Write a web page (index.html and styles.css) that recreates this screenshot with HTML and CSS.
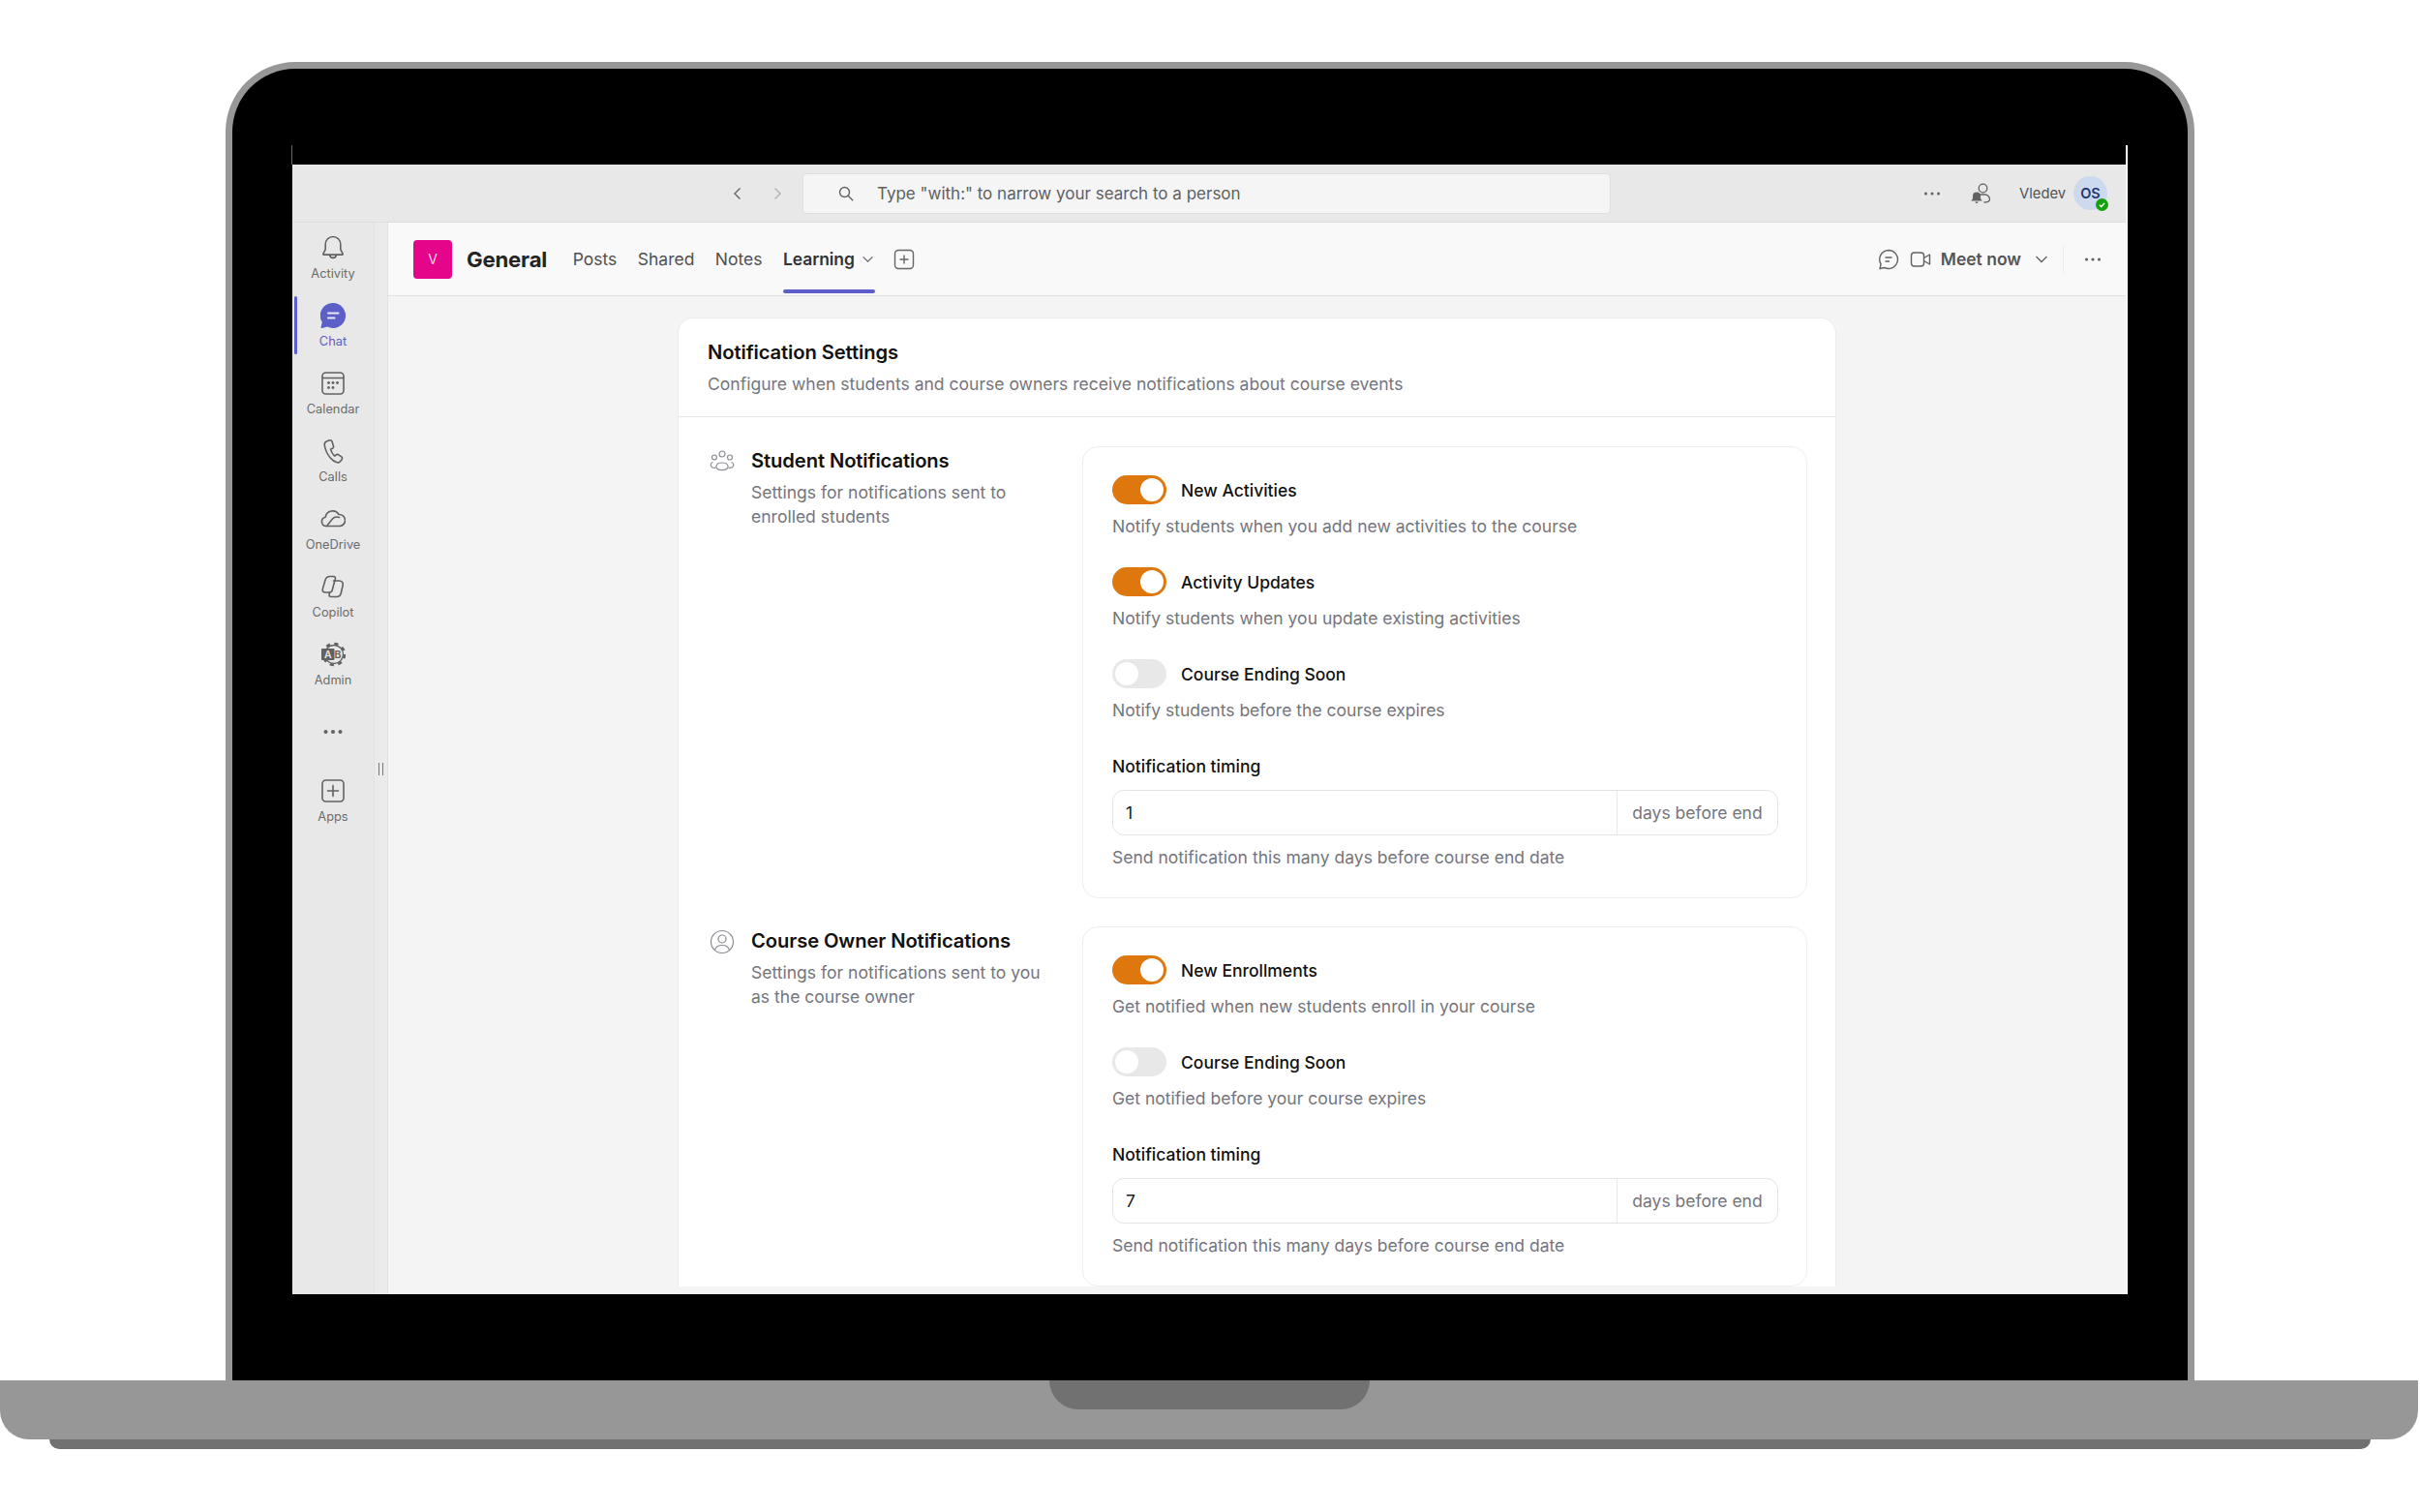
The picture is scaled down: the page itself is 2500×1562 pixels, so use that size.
FILE: index.html
```html
<!DOCTYPE html>
<html lang="en">
<head>
<meta charset="utf-8">
<title>Notification Settings</title>
<link rel="stylesheet" href="styles.css">
</head>
<body>
<div class="laptop">
  <div class="lid">
    <div class="screen">
      <header class="topbar">
        <svg class="nav-ic" viewBox="0 0 16 16"><path d="M10.500 2.500 5 8l5.500 5.500"/></svg>
        <svg class="nav-ic nav-fwd" viewBox="0 0 16 16"><path d="M5.500 2.500 11 8l-5.500 5.500"/></svg>
        <div class="search">
          <svg class="search-ic" viewBox="0 0 18 18"><circle cx="7.500" cy="7.500" r="5"/><path d="m11.200 11.200 5 5"/></svg>
          <span>Type "with:" to narrow your search to a person</span>
        </div>
        <div class="top-right">
          <svg class="dots top-dots" viewBox="0 0 18 4"><circle cx="2.500" cy="2" r="1.500"/><circle cx="9" cy="2" r="1.500"/><circle cx="15.500" cy="2" r="1.500"/></svg>
          <svg class="presence-ic" viewBox="0 0 22 22"><circle cx="13.500" cy="5.500" r="4.300" fill="none"/><path d="M10 12h5.500a5 5 0 0 1 5 5c0 2-2.500 3-6 3" fill="none"/><path class="solid" d="M7 9.500a4 4 0 0 0-4 4v2.500L1.300 18.500h11.400L11 16v-2.500a4 4 0 0 0-4-4zM5.500 19.500h3a1.500 1.500 0 0 1-3 0z"/></svg>
          <span class="user">Vledev</span>
          <div class="avatar">OS
            <span class="status"><svg viewBox="0 0 12 12"><path d="m3.500 6.200 1.800 1.700 3.200-3.500"/></svg></span>
          </div>
        </div>
      </header>
      <div class="app">
        <nav class="rail">
          <div class="rail-item">
            <svg class="rail-ic" viewBox="0 0 26 26"><path d="M13 1.500a7.800 7.800 0 0 0-7.800 7.800v5.400l-2.300 4.500a.6.600 0 0 0 .5.900h19.200a.6.600 0 0 0 .5-.900l-2.300-4.500V9.300A7.800 7.800 0 0 0 13 1.500z"/><path d="M9.800 20.200a3.200 3.200 0 0 0 6.400 0"/></svg>
            <span>Activity</span>
          </div>
          <div class="rail-item active">
            <svg class="rail-ic chat-ic" viewBox="0 0 26 26"><path class="fill" d="M13 0a13 13 0 1 1-5.800 24.600L1.800 26c-.8.200-1.500-.5-1.200-1.200l1.200-5A13 13 0 0 1 13 0z"/><path class="lines" d="M8 10.500h10.500M8 15.500h6.500"/></svg>
            <span>Chat</span>
          </div>
          <div class="rail-item">
            <svg class="rail-ic" viewBox="0 0 26 26"><rect x="2" y="2" width="22" height="22" rx="3.500"/><path d="M2 7.500h22"/><g class="pips"><circle cx="8.500" cy="12.500" r="1.400"/><circle cx="13" cy="12.500" r="1.400"/><circle cx="17.500" cy="12.500" r="1.400"/><circle cx="8.500" cy="17.500" r="1.400"/><circle cx="13" cy="17.500" r="1.400"/></g></svg>
            <span>Calendar</span>
          </div>
          <div class="rail-item">
            <svg class="rail-ic" viewBox="0 0 26 26"><path d="M9.500 1.800 6.800 2.700C5 3.300 4 5 4.300 7c.8 5 3 9.500 6 13 1.800 2.200 3.900 3.800 6.400 4.600 1.500.5 3.200 0 4.200-1.300l1.200-1.600c.7-.9.500-2.100-.4-2.800l-3-2.100c-.8-.5-1.800-.5-2.500.1l-1.500 1.200c-2-1.800-3.500-4.300-4.200-7l1.900-.9c.9-.4 1.300-1.400 1.100-2.300L12 3.100c-.3-1-1.500-1.600-2.500-1.300z"/></svg>
            <span>Calls</span>
          </div>
          <div class="rail-item">
            <svg class="rail-ic" viewBox="0 0 26 26"><path d="M6 20.500a4.700 4.700 0 0 1-.8-9.300A7.500 7.500 0 0 1 19 8.500a6 6 0 0 1 1 12z"/><path d="m6.500 20.500 6-7.500c1.500-1.800 4-2.600 7-1.500"/></svg>
            <span>OneDrive</span>
          </div>
          <div class="rail-item">
            <svg class="rail-ic" viewBox="0 0 26 26"><path d="M10 2.500h3.500c1.600 0 2.200 1 1.900 2.300l-3.200 12c-.4 1.500-1.400 2.200-2.800 2.200H5c-2 0-3.200-1.500-2.700-3.400L5 6.300C5.700 3.800 7.500 2.500 10 2.500z"/><path d="M13.500 7h6c2.500 0 4.300 2 3.700 4.500l-2 8.500c-.6 2.400-2.200 3.500-4.400 3.500H11c-1.500 0-2.300-1-1.900-2.400l.6-2.100"/></svg>
            <span>Copilot</span>
          </div>
          <div class="rail-item">
            <svg class="rail-ic admin-ic" viewBox="0 0 26 26"><circle cx="14" cy="13" r="9.500"/><circle class="teeth" cx="14" cy="13" r="11" stroke-dasharray="4.200 4.440"/><rect class="solid" x="1" y="7" width="13.500" height="12" rx="1"/><text class="admin-a" x="7.800" y="16.800">A</text><text class="admin-b" x="18" y="16.800">B</text></svg>
            <span>Admin</span>
          </div>
          <div class="rail-item rail-more">
            <svg class="dots more-dots" viewBox="0 0 20 4"><circle cx="2.500" cy="2" r="2"/><circle cx="10" cy="2" r="2"/><circle cx="17.500" cy="2" r="2"/></svg>
          </div>
          <div class="rail-item">
            <svg class="rail-ic" viewBox="0 0 26 26"><rect x="2" y="2" width="22" height="22" rx="3.500"/><path d="M13 7.500v11M7.500 13h11"/></svg>
            <span>Apps</span>
          </div>
        </nav>
        <div class="strip"><span class="grip"></span></div>
        <main class="main">
          <div class="channel">
            <div class="team">V</div>
            <h1 class="chan-name">General</h1>
            <div class="tabs">
              <span class="tab">Posts</span>
              <span class="tab">Shared</span>
              <span class="tab">Notes</span>
              <span class="tab tab-on">Learning
                <svg class="chev-s" viewBox="0 0 12 12"><path d="m1.500 4 4.500 4.500L10.500 4"/></svg>
              </span>
              <svg class="add-tab" viewBox="0 0 22 22"><rect x="1.500" y="1.500" width="19" height="19" rx="3.500"/><path d="M11 6.500v9M6.500 11h9"/></svg>
            </div>
            <div class="chan-right">
              <svg class="cr-ic" viewBox="0 0 22 22"><path d="M11 1.500a9.500 9.500 0 1 1-4.300 18L2 20.500l1.100-4.600A9.500 9.500 0 0 1 11 1.500z"/><path d="M7.500 9h7M7.500 13h4.500"/></svg>
              <svg class="cr-ic vid-ic" viewBox="0 0 22 22"><rect x="1.500" y="4" width="13" height="14" rx="3"/><path d="m14.500 9.500 6-3.500v10l-6-3.500"/></svg>
              <span class="meet">Meet now</span>
              <svg class="chev-m" viewBox="0 0 14 14"><path d="m1.500 4 5.500 5.500L12.500 4"/></svg>
              <span class="vr"></span>
              <svg class="dots chan-dots" viewBox="0 0 18 4"><circle cx="2.500" cy="2" r="1.600"/><circle cx="9" cy="2" r="1.600"/><circle cx="15.500" cy="2" r="1.600"/></svg>
            </div>
          </div>
          <div class="content">
            <section class="card">
              <div class="card-head">
                <h2 class="card-title">Notification Settings</h2>
                <p class="muted">Configure when students and course owners receive notifications about course events</p>
              </div>
              <div class="card-body">
                <div class="group">
                  <div class="group-info">
                    <svg class="group-ic" viewBox="0 0 26 24"><circle cx="13" cy="4" r="3"/><circle cx="5" cy="7.500" r="2.500"/><circle cx="21" cy="7.500" r="2.500"/><path d="M8 14.500c1-2 8.500-2 10 0 2 2.500 1 4-.5 5-2 1.500-7 1.500-9 0-1.500-1-2.500-2.500-.5-5z"/><path d="M3.500 12.500C1.500 13 .8 15 1.500 16.500c.6 1.200 2.500 2 4.800 1.800M22.500 12.500c2 .5 2.700 2.500 2 4-.6 1.200-2.500 2-4.800 1.800"/></svg>
                    <div class="group-text">
                      <h3 class="group-title">Student Notifications</h3>
                      <p class="muted">Settings for notifications sent to enrolled students</p>
                    </div>
                  </div>
                  <div class="panel">
                    <div class="setting">
                      <div class="row"><span class="switch on"></span><span class="label">New Activities</span></div>
                      <p class="muted hint">Notify students when you add new activities to the course</p>
                    </div>
                    <div class="setting">
                      <div class="row"><span class="switch on"></span><span class="label">Activity Updates</span></div>
                      <p class="muted hint">Notify students when you update existing activities</p>
                    </div>
                    <div class="setting">
                      <div class="row"><span class="switch"></span><span class="label">Course Ending Soon</span></div>
                      <p class="muted hint">Notify students before the course expires</p>
                    </div>
                    <div class="row"><span class="label flush">Notification timing</span></div>
                    <div class="field"><span class="value">1</span><span class="unit">days before end</span></div>
                    <p class="muted hint">Send notification this many days before course end date</p>
                  </div>
                </div>
                <div class="group">
                  <div class="group-info">
                    <svg class="group-ic" viewBox="0 0 26 26"><circle cx="13" cy="13" r="11.500"/><circle cx="13" cy="10" r="4"/><path d="M5.500 21.500c1-3.500 4-5 7.500-5s6.500 1.500 7.500 5"/></svg>
                    <div class="group-text">
                      <h3 class="group-title">Course Owner Notifications</h3>
                      <p class="muted">Settings for notifications sent to you as the course owner</p>
                    </div>
                  </div>
                  <div class="panel">
                    <div class="setting">
                      <div class="row"><span class="switch on"></span><span class="label">New Enrollments</span></div>
                      <p class="muted hint">Get notified when new students enroll in your course</p>
                    </div>
                    <div class="setting">
                      <div class="row"><span class="switch"></span><span class="label">Course Ending Soon</span></div>
                      <p class="muted hint">Get notified before your course expires</p>
                    </div>
                    <div class="row"><span class="label flush">Notification timing</span></div>
                    <div class="field"><span class="value">7</span><span class="unit">days before end</span></div>
                    <p class="muted hint">Send notification this many days before course end date</p>
                  </div>
                </div>
              </div>
            </section>
          </div>
        </main>
      </div>
    </div>
  </div>
  <div class="base"><div class="notch"></div></div>
  <div class="foot"></div>
</div>
</body>
</html>
```
FILE: styles.css
```css
* { box-sizing: border-box; }
html, body { margin: 0; padding: 0; background: #fff; }
body { font-family: Inter, "Noto Sans", sans-serif; color: #111; overflow: hidden; }
h1, h2, h3, p { margin: 0; font: inherit; }
svg { display: block; flex: none; }

.laptop { width: 2500px; height: 1562px; padding-top: 64px; }
.lid {
  position: relative;
  width: 2034px; height: 1362px; margin-left: 233px;
  border: 7px solid #979797; border-bottom: 0;
  border-radius: 72px 72px 0 0;
  background: #000;
  padding: 99px 62px 89px;
}
.lid::before { content: ""; position: absolute; left: 61px; top: 79px; width: 1px; height: 20px; background: #666; }
.lid::after { content: ""; position: absolute; right: 62px; top: 79px; bottom: 89px; width: 2px; background: #fff; }
.base {
  width: 2498px; height: 61px;
  background: #979797;
  border-radius: 0 0 30px 30px;
  display: flex; justify-content: center;
}
.notch { width: 331px; height: 30px; background: #717171; border-radius: 0 0 30px 30px; }
.foot { width: 2398px; height: 10px; margin-left: 51px; background: #717171; border-radius: 0 0 10px 10px; }

.screen { width: 1896px; height: 1167px; overflow: hidden; display: flex; flex-direction: column; background: #f4f4f4; }

.topbar { height: 60px; flex: none; background: #e8e8e8; border-bottom: 1px solid #dedede; display: flex; align-items: center; padding: 0 21px 0 452px; }
.nav-ic { width: 16px; height: 16px; fill: none; stroke: #666; stroke-width: 1.400; }
.nav-fwd { margin-left: 25px; stroke: #b0b0b0; }
.search { width: 835px; height: 42px; margin-left: 18px; background: #f5f5f5; border: 1px solid #e0e0e0; border-radius: 4px; display: flex; align-items: center; padding-left: 35px; font-size: 17px; color: #5f5f5f; }
.search-ic { width: 18px; height: 18px; margin-right: 23px; fill: none; stroke: #616161; stroke-width: 1.400; }
.top-right { margin-left: auto; display: flex; align-items: center; }
.dots { fill: #616161; }
.top-dots { width: 18px; height: 4px; margin-right: 1px; }
.presence-ic { width: 22px; height: 22px; margin-left: 29px; margin-right: -1px; fill: none; stroke: #616161; stroke-width: 1.300; }
.presence-ic .solid { fill: #616161; stroke: none; }
.user { margin-left: 30px; font-size: 14.800px; color: #555; width: 56px; }
.avatar { position: relative; width: 35px; height: 35px; border-radius: 50%; background: #cdd9ee; color: #1f3572; font-size: 14.500px; font-weight: 600; display: flex; align-items: center; justify-content: center; }
.status { position: absolute; right: -1px; bottom: -1px; width: 13px; height: 13px; border-radius: 50%; background: #13a10e; }
.status svg { width: 13px; height: 13px; fill: none; stroke: #fff; stroke-width: 1.300; }

.app { flex: 1; min-height: 0; display: flex; }
.rail { width: 84px; flex: none; background: #e8e8e8; display: flex; flex-direction: column; }
.rail-item { position: relative; height: 70px; padding-top: 13px; display: flex; flex-direction: column; align-items: center; font-size: 12.800px; line-height: 16px; color: #6b6b6b; }
.rail-ic { width: 26px; height: 26px; margin-bottom: 6px; fill: none; stroke: #616161; stroke-width: 1.600; stroke-linecap: round; stroke-linejoin: round; }
.rail-item.active { color: #5b5fc7; }
.rail-item.active::before { content: ""; position: absolute; left: 2px; top: 6px; width: 3px; height: 60px; background: #5b5fc7; border-radius: 2px; }
.chat-ic .fill { fill: #5b5fc7; stroke: none; }
.chat-ic .lines { stroke: #e8e8f8; stroke-width: 2; }
.pips circle { fill: #616161; stroke: none; }
.admin-ic circle { stroke-width: 1.300; }
.admin-ic .teeth { stroke-width: 2.600; stroke-linecap: butt; }
.admin-ic .solid { fill: #616161; stroke: none; }
.admin-a, .admin-b { stroke: none; font-size: 10.500px; font-weight: 600; text-anchor: middle; font-family: Inter, sans-serif; }
.admin-a { fill: #e8e8e8; }
.admin-b { fill: #616161; }
.rail-more { height: 71px; padding-top: 34px; }
.more-dots { width: 20px; height: 4px; }

.strip { position: relative; width: 15px; flex: none; background: #ebebeb; border-left: 1px solid #e2e2e2; border-right: 1px solid #e2e2e2; }
.grip { position: absolute; left: 4px; top: 558px; width: 5px; height: 13px; border-left: 1.500px solid #7a7a7a; border-right: 1.500px solid #7a7a7a; }

.main { flex: 1; min-width: 0; display: flex; flex-direction: column; }
.channel { height: 76px; flex: none; background: #f9f9f9; border-bottom: 1px solid #e0e0e0; display: flex; align-items: center; padding: 0 27px 0 26px; }
.team { width: 40px; height: 40px; border-radius: 4px; background: #e5058b; color: #fbd5ea; font-size: 14px; display: flex; align-items: center; justify-content: center; }
.chan-name { margin-left: 15px; font-size: 22.200px; font-weight: 700; color: #242424; letter-spacing: -.2px; }
.tabs { margin-left: 26.500px; display: flex; align-items: center; gap: 21.500px; height: 100%; font-size: 17.500px; color: #505050; }
.tab { position: relative; display: flex; align-items: center; height: 100%; }
.tab-on { font-weight: 600; color: #333; width: 95px; letter-spacing: -.1px; }
.tab-on::after { content: ""; position: absolute; left: 0; right: 0; bottom: 2px; height: 4px; border-radius: 2px; background: #5b5fc7; }
.chev-s { width: 13px; height: 13px; margin-left: 7px; fill: none; stroke: #666; stroke-width: 1.100; }
.add-tab { width: 22px; height: 22px; margin-left: -2.500px; fill: none; stroke: #666; stroke-width: 1.400; }
.chan-right { margin-left: auto; display: flex; align-items: center; }
.cr-ic { width: 22px; height: 22px; fill: none; stroke: #616161; stroke-width: 1.400; stroke-linejoin: round; }
.vid-ic { margin-left: 11px; }
.meet { margin-left: 10px; font-size: 17.500px; font-weight: 600; color: #555; white-space: nowrap; }
.chev-m { width: 14px; height: 14px; margin-left: 14px; fill: none; stroke: #616161; stroke-width: 1.300; }
.vr { width: 1px; height: 30px; margin-left: 15px; background: #ececec; }
.chan-dots { width: 18px; height: 4px; margin-left: 21px; }

.content { flex: 1; min-height: 0; overflow: hidden; padding: 22px 0 0 299px; }
.card { width: 1197px; background: #fff; border: 1px solid #ebebeb; border-bottom: 0; border-radius: 16px 16px 0 0; }
.card-head { height: 102px; padding: 18px 30px 0; border-bottom: 1px solid #e8e8e8; }
.card-title { font-size: 20.200px; line-height: 34px; font-weight: 600; color: #111; letter-spacing: -.1px; }
.muted { font-size: 17.550px; line-height: 25px; color: #75757d; }
.card-head .muted { margin-top: 2px; line-height: 28px; }
.card-body { padding: 30px 29px 0 30px; display: flex; flex-direction: column; gap: 29px; }
.group { display: flex; }
.group-info { width: 387px; flex: none; display: flex; padding-left: 2px; }
.group-ic { width: 26px; height: 26px; margin-top: 3px; fill: none; stroke: #8a8a92; stroke-width: 1.200; }
.group-text { margin-left: 17px; width: 310px; }
.group-title { font-size: 20.200px; line-height: 30px; font-weight: 600; color: #111; white-space: nowrap; letter-spacing: -.1px; }
.group-title + .muted { margin-top: 5px; }
.panel { flex: 1; min-width: 0; border: 1px solid #eeeeee; border-radius: 16px; padding: 29px 29px 29px 30px; }
.setting { height: 95px; }
.row { display: flex; align-items: center; height: 30px; }
.switch { position: relative; width: 56px; height: 30px; flex: none; border-radius: 15px; background: #e8e8e8; }
.switch::after { content: ""; position: absolute; left: 3px; top: 3px; width: 24px; height: 24px; border-radius: 50%; background: #fff; }
.switch.on { background: #dd770e; }
.switch.on::after { left: 29px; }
.label { margin-left: 15px; font-size: 17.500px; font-weight: 500; color: #111; white-space: nowrap; }
.label.flush { margin-left: 0; }
.hint { margin-top: 10px; }
.field { display: flex; height: 47px; margin-top: 10px; border: 1px solid #e4e4e4; border-radius: 12px; align-items: center; font-size: 17.500px; }
.value { flex: 1; padding-left: 13px; color: #222; }
.unit { width: 166px; height: 100%; display: flex; align-items: center; justify-content: center; border-left: 1px solid #e8e8e8; color: #75757d; }
```
